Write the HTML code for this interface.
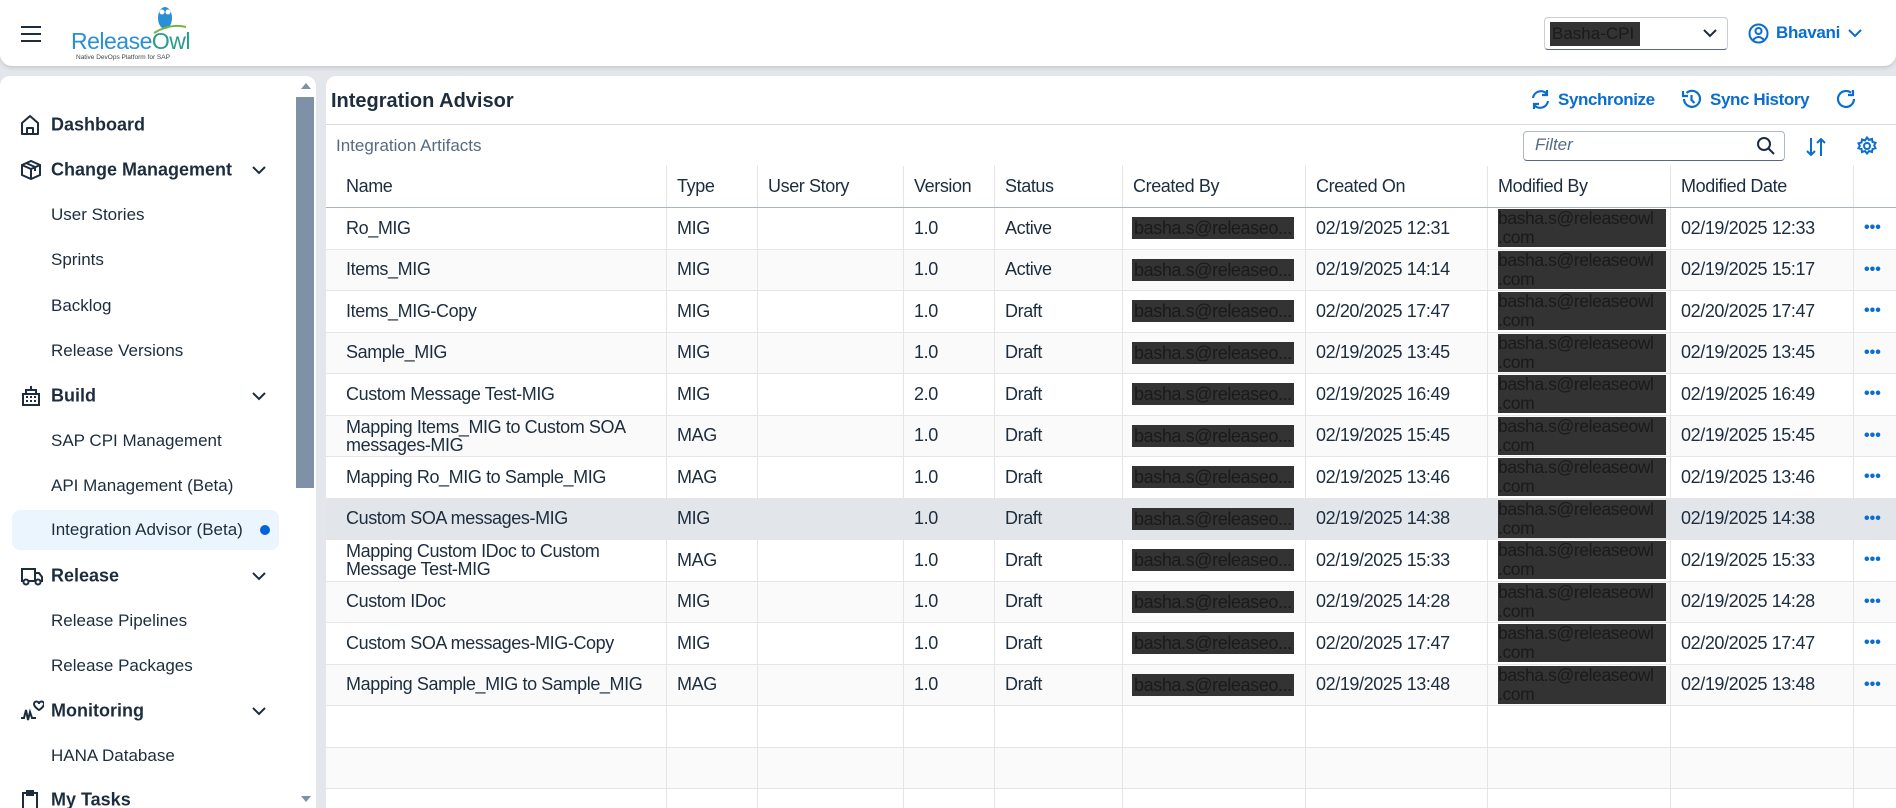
<!DOCTYPE html>
<html><head><meta charset="utf-8"><style>
*{box-sizing:border-box;margin:0;padding:0}
html,body{width:1896px;height:808px;overflow:hidden}
body{background:#e3e6ea;font-family:"Liberation Sans",sans-serif;color:#1d2d3e;position:relative}
#w{position:absolute;left:0;top:0;width:1896px;height:808px;overflow:hidden}
.hdr{position:absolute;left:0;top:0;width:1896px;height:66px;background:#fff;border-radius:0 0 12px 12px;box-shadow:0 2px 4px rgba(0,0,0,.12)}
.side{position:absolute;left:0;top:76px;width:316px;height:732px;background:#fff;border-radius:10px 10px 0 0}
.sbar{position:absolute;left:296px;top:97px;width:18px;height:391px;background:#7e91a6}
.nav{position:absolute;left:51px;font-size:17px;color:#1d2d3e;white-space:nowrap;transform:translateY(-50%)}
.nav.b{font-weight:bold;font-size:18px}
.ico{position:absolute;left:20px;transform:translateY(-50%)}
.chev{position:absolute;left:252px;transform:translateY(-50%)}
.card{position:absolute;left:326px;top:76px;width:1570px;height:732px;background:#fff;border-radius:10px 0 0 0}
.row{position:absolute;left:326px;width:1570px;display:flex;border-bottom:1px solid #e5e5e5;font-size:18px;letter-spacing:-.4px}
.row>div{border-left:1px solid #e5e5e5;padding-left:10px;display:flex;align-items:center;height:100%;white-space:nowrap;overflow:hidden;position:relative}
.row>div:first-child{border-left:none;padding-left:20px}
.m1{background:#333;color:#1a1a1a;padding:0 2px;line-height:22px;margin-left:-1px}
.m2{background:#333;color:#1a1a1a;line-height:19px;font-size:17.5px;white-space:normal;width:168px}
.dots{color:#0a6ed1;font-size:16px;font-weight:bold;letter-spacing:0}
.blue{color:#0a6ed1}
</style></head><body><div id="w">
<div class="hdr">
 <svg style="position:absolute;left:21px;top:25px" width="20" height="18"><path d="M0 2h20M0 9h20M0 16h20" stroke="#1d2d3e" stroke-width="2"/></svg>
 <svg style="position:absolute;left:148px;top:3px" width="40" height="34"><ellipse cx="17" cy="15" rx="7" ry="11" fill="#2a8fd5"/><circle cx="14" cy="9" r="2.5" fill="#fff"/><circle cx="20" cy="9" r="2.5" fill="#fff"/><path d="M6 30 Q22 20 38 24" stroke="#7bb342" stroke-width="2" fill="none"/></svg>
 <div style="position:absolute;left:71px;top:28px;font-size:23px;color:#2a8fd5;letter-spacing:-.5px">Release<span style="color:#2a9c8c">Owl</span></div>
 <div style="position:absolute;left:76px;top:54px;font-size:6.5px;color:#444">Native DevOps Platform for SAP</div>
 <div style="position:absolute;left:1544px;top:17px;width:184px;height:33px;border:1px solid #c9ced4;border-bottom:1px solid #556b82;border-radius:4px;background:#fff"></div>
 <div style="position:absolute;left:1550px;top:22px;width:90px;height:24px;background:#333;color:#1a1a1a;font-size:17px;line-height:24px;padding-left:2px">Basha-CPI</div>
 <svg style="position:absolute;left:1703px;top:28px" width="14" height="10"><path d="M1 2l6 6 6-6" stroke="#1d2d3e" stroke-width="2" fill="none"/></svg>
 <svg style="position:absolute;left:1748px;top:23px" width="21" height="21"><circle cx="10.5" cy="10.5" r="9" stroke="#0a6ed1" stroke-width="2" fill="none"/><circle cx="10.5" cy="8" r="3" stroke="#0a6ed1" stroke-width="2" fill="none"/><path d="M5 17q5.5-6 11 0" stroke="#0a6ed1" stroke-width="2" fill="none"/></svg>
 <div style="position:absolute;left:1776px;top:23px;font-size:17px;font-weight:bold;letter-spacing:-.3px" class="blue">Bhavani</div>
 <svg style="position:absolute;left:1848px;top:28px" width="14" height="10"><path d="M1 2l6 6 6-6" stroke="#0a6ed1" stroke-width="2" fill="none"/></svg>
</div>

<div class="side"></div>
<svg style="position:absolute;left:300px;top:82px" width="12" height="8"><path d="M1 7L6 1 11 7z" fill="#7e91a6"/></svg>
<div class="sbar"></div>
<svg style="position:absolute;left:300px;top:795px" width="12" height="8"><path d="M1 1L6 7 11 1z" fill="#7e91a6"/></svg>
<div style="position:absolute;left:12px;top:510px;width:267px;height:40px;background:#ebf5fe;border-radius:8px"></div>
<div style="position:absolute;left:260px;top:525px;width:10px;height:10px;border-radius:50%;background:#0064d9"></div>

<svg class="ico" style="top:125px" width="20" height="22"><path d="M2 20V9l8-7 8 7v11zM7 20v-6h6v6" stroke="#1d2d3e" stroke-width="2" fill="none" stroke-linejoin="round"/></svg>
<div class="nav b" style="top:125px">Dashboard</div>
<svg class="ico" style="top:170px" width="22" height="22"><path d="M2 6l9-4 9 4v10l-9 4-9-4zM2 6l9 4 9-4M11 10v10M6 4l9 4v4" stroke="#1d2d3e" stroke-width="2" fill="none"/></svg>
<div class="nav b" style="top:170px">Change Management</div>
<div class="nav" style="top:215px">User Stories</div>
<div class="nav" style="top:260px">Sprints</div>
<div class="nav" style="top:306px">Backlog</div>
<div class="nav" style="top:351px">Release Versions</div>
<svg class="ico" style="top:396px" width="22" height="22"><path d="M2 20h18M3 20V9h16v11M6 9V5h10v4M11 5V1M6 12h2M10 12h2M14 12h2M6 16h2M10 16h2M14 16h2" stroke="#1d2d3e" stroke-width="2" fill="none"/></svg>
<div class="nav b" style="top:396px">Build</div>
<div class="nav" style="top:441px">SAP CPI Management</div>
<div class="nav" style="top:486px">API Management (Beta)</div>
<div class="nav" style="top:530px">Integration Advisor (Beta)</div>
<svg class="ico" style="top:576px" width="24" height="20"><path d="M2 3h13v12H2zM15 7h4l3 4v4h-7" stroke="#1d2d3e" stroke-width="2" fill="none"/><circle cx="6" cy="16" r="2.5" fill="#fff" stroke="#1d2d3e" stroke-width="2"/><circle cx="18" cy="16" r="2.5" fill="#fff" stroke="#1d2d3e" stroke-width="2"/></svg>
<div class="nav b" style="top:576px">Release</div>
<div class="nav" style="top:621px">Release Pipelines</div>
<div class="nav" style="top:666px">Release Packages</div>
<svg class="ico" style="top:711px" width="24" height="22"><path d="M1 18h3l2-8 2 10 2-8 2 6h4M14 4a2.5 2.5 0 015 0 2.5 2.5 0 015 0c0 3-5 6-5 6s-5-3-5-6" stroke="#1d2d3e" stroke-width="2" fill="none"/></svg>
<div class="nav b" style="top:711px">Monitoring</div>
<div class="nav" style="top:756px">HANA Database</div>
<svg class="ico" style="top:800px" width="20" height="22"><path d="M3 4h14v18H3zM7 2h6v4H7z" stroke="#1d2d3e" stroke-width="2" fill="none"/></svg>
<div class="nav b" style="top:800px">My Tasks</div>
<svg class="chev" style="top:170px" width="14" height="10"><path d="M1 2l6 6 6-6" stroke="#1d2d3e" stroke-width="2" fill="none"/></svg>
<svg class="chev" style="top:396px" width="14" height="10"><path d="M1 2l6 6 6-6" stroke="#1d2d3e" stroke-width="2" fill="none"/></svg>
<svg class="chev" style="top:576px" width="14" height="10"><path d="M1 2l6 6 6-6" stroke="#1d2d3e" stroke-width="2" fill="none"/></svg>
<svg class="chev" style="top:711px" width="14" height="10"><path d="M1 2l6 6 6-6" stroke="#1d2d3e" stroke-width="2" fill="none"/></svg>

<div class="card"></div>
<div style="position:absolute;left:331px;top:90px;font-size:20px;font-weight:bold">Integration Advisor</div>
<div style="position:absolute;left:326px;top:124px;width:1570px;height:1px;background:#d9dde2"></div>
<svg style="position:absolute;left:1530px;top:89px" width="21" height="21" fill="none" stroke="#0a6ed1" stroke-width="2.2"><path d="M3 9a8 8 0 0114-4M17 1v5h-5M18 12a8 8 0 01-14 4M4 20v-5h5"/></svg>
<div style="position:absolute;left:1558px;top:90px;font-size:17px;font-weight:bold;letter-spacing:-.4px" class="blue">Synchronize</div>
<svg style="position:absolute;left:1681px;top:89px" width="21" height="21" fill="none" stroke="#0a6ed1" stroke-width="2.2"><path d="M3 10a8 8 0 102.5-6M2 2v5h5M10.5 6v5l3 3"/></svg>
<div style="position:absolute;left:1710px;top:90px;font-size:17px;font-weight:bold;letter-spacing:-.4px" class="blue">Sync History</div>
<svg style="position:absolute;left:1836px;top:89px" width="21" height="21" fill="none" stroke="#0a6ed1" stroke-width="2.2"><path d="M18 10a8 8 0 11-3-6.3M17 1v5h-5"/></svg>

<div style="position:absolute;left:336px;top:136px;font-size:17px;color:#556b82">Integration Artifacts</div>
<div style="position:absolute;left:1523px;top:131px;width:262px;height:30px;border:1px solid #b0b8c2;border-bottom:1px solid #556b82;border-radius:4px;background:#fff"></div>
<div style="position:absolute;left:1535px;top:135px;font-size:17px;font-style:italic;color:#556b82">Filter</div>
<svg style="position:absolute;left:1756px;top:136px" width="20" height="20" fill="none" stroke="#1d2d3e" stroke-width="2"><circle cx="8" cy="8" r="6"/><path d="M12.5 12.5L18 18"/></svg>
<svg style="position:absolute;left:1806px;top:136px" width="20" height="22" fill="none" stroke="#0a6ed1" stroke-width="2"><path d="M5 2v17M1 15l4 4 4-4M15 20V3M11 7l4-4 4 4"/></svg>
<svg style="position:absolute;left:1857px;top:136px" width="20" height="20" fill="none" stroke="#0a6ed1" stroke-width="2"><circle cx="10" cy="10" r="3"/><path d="M10 1.5l2 2.5 3-1 .5 3 3 .8-1.3 2.7 1.3 2.7-3 .8-.5 3-3-1-2 2.5-2-2.5-3 1-.5-3-3-.8L2.8 10 1.5 7.3l3-.8.5-3 3 1z"/></svg>

<div class="row" style="top:166px;height:42px;border-bottom:1px solid #a9b4be;font-size:18px">
<div style="width:340px">Name</div><div style="width:91px">Type</div><div style="width:146px">User Story</div><div style="width:91px">Version</div><div style="width:128px">Status</div><div style="width:183px">Created By</div><div style="width:182px">Created On</div><div style="width:183px">Modified By</div><div style="width:183px">Modified Date</div><div style="width:43px"></div>
</div>

<div class="row" style="top:208px;height:41.5px;background:#fff"><div style="width:340px">Ro_MIG</div><div style="width:91px">MIG</div><div style="width:146px"></div><div style="width:91px">1.0</div><div style="width:128px">Active</div><div style="width:183px"><span class="m1">basha.s@releaseo...</span></div><div style="width:182px">02/19/2025 12:31</div><div style="width:183px"><div class="m2">basha.s@releaseowl .com</div></div><div style="width:183px">02/19/2025 12:33</div><div style="width:43px"><span class="dots">•••</span></div></div>
<div class="row" style="top:249.5px;height:41.5px;background:#fafafa"><div style="width:340px">Items_MIG</div><div style="width:91px">MIG</div><div style="width:146px"></div><div style="width:91px">1.0</div><div style="width:128px">Active</div><div style="width:183px"><span class="m1">basha.s@releaseo...</span></div><div style="width:182px">02/19/2025 14:14</div><div style="width:183px"><div class="m2">basha.s@releaseowl .com</div></div><div style="width:183px">02/19/2025 15:17</div><div style="width:43px"><span class="dots">•••</span></div></div>
<div class="row" style="top:291px;height:41.5px;background:#fff"><div style="width:340px">Items_MIG-Copy</div><div style="width:91px">MIG</div><div style="width:146px"></div><div style="width:91px">1.0</div><div style="width:128px">Draft</div><div style="width:183px"><span class="m1">basha.s@releaseo...</span></div><div style="width:182px">02/20/2025 17:47</div><div style="width:183px"><div class="m2">basha.s@releaseowl .com</div></div><div style="width:183px">02/20/2025 17:47</div><div style="width:43px"><span class="dots">•••</span></div></div>
<div class="row" style="top:332.5px;height:41.5px;background:#fafafa"><div style="width:340px">Sample_MIG</div><div style="width:91px">MIG</div><div style="width:146px"></div><div style="width:91px">1.0</div><div style="width:128px">Draft</div><div style="width:183px"><span class="m1">basha.s@releaseo...</span></div><div style="width:182px">02/19/2025 13:45</div><div style="width:183px"><div class="m2">basha.s@releaseowl .com</div></div><div style="width:183px">02/19/2025 13:45</div><div style="width:43px"><span class="dots">•••</span></div></div>
<div class="row" style="top:374px;height:41.5px;background:#fff"><div style="width:340px">Custom Message Test-MIG</div><div style="width:91px">MIG</div><div style="width:146px"></div><div style="width:91px">2.0</div><div style="width:128px">Draft</div><div style="width:183px"><span class="m1">basha.s@releaseo...</span></div><div style="width:182px">02/19/2025 16:49</div><div style="width:183px"><div class="m2">basha.s@releaseowl .com</div></div><div style="width:183px">02/19/2025 16:49</div><div style="width:43px"><span class="dots">•••</span></div></div>
<div class="row" style="top:415.5px;height:41.5px;background:#fafafa"><div style="width:340px;white-space:normal;line-height:18px">Mapping Items_MIG to Custom SOA messages-MIG</div><div style="width:91px">MAG</div><div style="width:146px"></div><div style="width:91px">1.0</div><div style="width:128px">Draft</div><div style="width:183px"><span class="m1">basha.s@releaseo...</span></div><div style="width:182px">02/19/2025 15:45</div><div style="width:183px"><div class="m2">basha.s@releaseowl .com</div></div><div style="width:183px">02/19/2025 15:45</div><div style="width:43px"><span class="dots">•••</span></div></div>
<div class="row" style="top:457px;height:41.5px;background:#fff"><div style="width:340px">Mapping Ro_MIG to Sample_MIG</div><div style="width:91px">MAG</div><div style="width:146px"></div><div style="width:91px">1.0</div><div style="width:128px">Draft</div><div style="width:183px"><span class="m1">basha.s@releaseo...</span></div><div style="width:182px">02/19/2025 13:46</div><div style="width:183px"><div class="m2">basha.s@releaseowl .com</div></div><div style="width:183px">02/19/2025 13:46</div><div style="width:43px"><span class="dots">•••</span></div></div>
<div class="row" style="top:498.5px;height:41.5px;background:#e2e6ea"><div style="width:340px">Custom SOA messages-MIG</div><div style="width:91px">MIG</div><div style="width:146px"></div><div style="width:91px">1.0</div><div style="width:128px">Draft</div><div style="width:183px"><span class="m1">basha.s@releaseo...</span></div><div style="width:182px">02/19/2025 14:38</div><div style="width:183px"><div class="m2">basha.s@releaseowl .com</div></div><div style="width:183px">02/19/2025 14:38</div><div style="width:43px"><span class="dots">•••</span></div></div>
<div class="row" style="top:540px;height:41.5px;background:#fff"><div style="width:340px;white-space:normal;line-height:18px">Mapping Custom IDoc to Custom Message Test-MIG</div><div style="width:91px">MAG</div><div style="width:146px"></div><div style="width:91px">1.0</div><div style="width:128px">Draft</div><div style="width:183px"><span class="m1">basha.s@releaseo...</span></div><div style="width:182px">02/19/2025 15:33</div><div style="width:183px"><div class="m2">basha.s@releaseowl .com</div></div><div style="width:183px">02/19/2025 15:33</div><div style="width:43px"><span class="dots">•••</span></div></div>
<div class="row" style="top:581.5px;height:41.5px;background:#fafafa"><div style="width:340px">Custom IDoc</div><div style="width:91px">MIG</div><div style="width:146px"></div><div style="width:91px">1.0</div><div style="width:128px">Draft</div><div style="width:183px"><span class="m1">basha.s@releaseo...</span></div><div style="width:182px">02/19/2025 14:28</div><div style="width:183px"><div class="m2">basha.s@releaseowl .com</div></div><div style="width:183px">02/19/2025 14:28</div><div style="width:43px"><span class="dots">•••</span></div></div>
<div class="row" style="top:623px;height:41.5px;background:#fff"><div style="width:340px">Custom SOA messages-MIG-Copy</div><div style="width:91px">MIG</div><div style="width:146px"></div><div style="width:91px">1.0</div><div style="width:128px">Draft</div><div style="width:183px"><span class="m1">basha.s@releaseo...</span></div><div style="width:182px">02/20/2025 17:47</div><div style="width:183px"><div class="m2">basha.s@releaseowl .com</div></div><div style="width:183px">02/20/2025 17:47</div><div style="width:43px"><span class="dots">•••</span></div></div>
<div class="row" style="top:664.5px;height:41.5px;background:#fafafa"><div style="width:340px">Mapping Sample_MIG to Sample_MIG</div><div style="width:91px">MAG</div><div style="width:146px"></div><div style="width:91px">1.0</div><div style="width:128px">Draft</div><div style="width:183px"><span class="m1">basha.s@releaseo...</span></div><div style="width:182px">02/19/2025 13:48</div><div style="width:183px"><div class="m2">basha.s@releaseowl .com</div></div><div style="width:183px">02/19/2025 13:48</div><div style="width:43px"><span class="dots">•••</span></div></div>
<div class="row" style="top:706px;height:41.5px;background:#fff"><div style="width:340px"></div><div style="width:91px"></div><div style="width:146px"></div><div style="width:91px"></div><div style="width:128px"></div><div style="width:183px"></div><div style="width:182px"></div><div style="width:183px"></div><div style="width:183px"></div><div style="width:43px"></div></div>
<div class="row" style="top:747.5px;height:41.5px;background:#fafafa"><div style="width:340px"></div><div style="width:91px"></div><div style="width:146px"></div><div style="width:91px"></div><div style="width:128px"></div><div style="width:183px"></div><div style="width:182px"></div><div style="width:183px"></div><div style="width:183px"></div><div style="width:43px"></div></div>
<div class="row" style="top:789px;height:19px;background:#fff;border-bottom:none"><div style="width:340px"></div><div style="width:91px"></div><div style="width:146px"></div><div style="width:91px"></div><div style="width:128px"></div><div style="width:183px"></div><div style="width:182px"></div><div style="width:183px"></div><div style="width:183px"></div><div style="width:43px"></div></div>
</div></body></html>
